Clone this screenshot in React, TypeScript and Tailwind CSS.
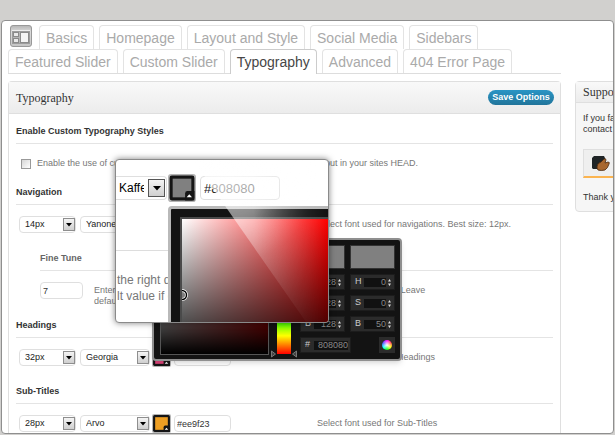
import { useState } from 'react';
import clsx from 'clsx';

const tabRows = [
  ['Basics', 'Homepage', 'Layout and Style', 'Social Media', 'Sidebars'],
  ['Featured Slider', 'Custom Slider', 'Typography', 'Advanced', '404 Error Page'],
];

const rgb = [
  { label: 'R', value: '128' },
  { label: 'G', value: '128' },
  { label: 'B', value: '128' },
];

const hsb = [
  { label: 'H', value: '0' },
  { label: 'S', value: '0' },
  { label: 'B', value: '50' },
];

function LayoutIcon() {
  return (
    <svg width="23" height="23" viewBox="0 0 23 23" className="shrink-0" aria-hidden="true">
      <defs>
        <linearGradient id="frame" x1="0" y1="0" x2="0" y2="1">
          <stop offset="0" stopColor="#b4b4b4" />
          <stop offset="0.3" stopColor="#dcdcdc" />
          <stop offset="1" stopColor="#c4c4c4" />
        </linearGradient>
      </defs>
      <rect x="0.5" y="0.5" width="21" height="21" rx="2.5" fill="url(#frame)" stroke="#999" />
      <path d="M2 5.5h18" stroke="#eee" />
      <rect x="2.5" y="6.5" width="17" height="12" fill="#b4b4b4" stroke="#9c9c9c" />
      <rect x="3.5" y="7.5" width="5" height="4" fill="#e9e9e9" stroke="#8a8a8a" />
      <rect x="3.5" y="13.500" width="5" height="4" fill="#e9e9e9" stroke="#8a8a8a" />
      <rect x="10.5" y="7.5" width="8" height="10" fill="#f4f4f4" stroke="#8a8a8a" />
    </svg>
  );
}

function Tab({ name, active, onClick }: { name: string; active: boolean; onClick: () => void }) {
  return (
    <button
      type="button"
      onClick={onClick}
      className={clsx(
        'h-6 rounded-t-sm border border-b-0 px-1.5 text-sm leading-[22px] whitespace-nowrap',
        active ? '-mb-px h-[25px] border-[#ccc] bg-white text-[#464646]' : 'border-[#e3e3e3] text-[#aaa]'
      )}
    >
      {name}
    </button>
  );
}

function Select({ label, value, className }: { label: string; value: string; className: string }) {
  return (
    <div className={clsx('relative h-[17px] shrink-0', className)}>
      <select
        aria-label={label}
        defaultValue={value}
        className="block h-full w-full appearance-none rounded-sm border border-[#dfdfdf] bg-white pl-[5px] text-[9px] leading-[15px] text-[#222]"
      >
        <option>{value}</option>
      </select>
      <span className="pointer-events-none absolute top-0.5 right-px flex h-[13px] w-3 items-center justify-center border border-[#8e8e8e] bg-gradient-to-b from-[#f4f4f4] to-[#cfcfcf]">
        <svg width="6" height="4" viewBox="0 0 6 4">
          <path d="M0 0h6L3 3.5z" fill="#000" />
        </svg>
      </span>
    </div>
  );
}

function Swatch({ color, size }: { color: string; size: number }) {
  return (
    <button type="button" aria-label={`Pick color ${color}`} className="shrink-0">
      <svg width={size} height={size} viewBox="0 0 18 18">
        <rect width="18" height="18" rx="2" fill="#b5b5b5" />
        <rect x="1" y="1" width="16" height="16" rx="1.5" fill="#151515" />
        <rect x="3" y="3" width="12" height="12" fill={color} />
        <path d="M11 17v-4.500q0-1.500 1.500-1.500H17v6z" fill="#151515" />
        <path d="M12 15l1.700-2 1.700 2z" fill="#fff" />
      </svg>
    </button>
  );
}

function SectionTitle({ children, sub }: { children: string; sub?: boolean }) {
  return (
    <h3
      className={clsx(
        'border-b border-[#e4e4e4] pb-1 text-[9px] leading-4 font-bold',
        sub ? 'ml-6 text-[#666]' : 'text-[#333]'
      )}
    >
      {children}
    </h3>
  );
}

type FontRowProps = { name: string; size: string; font: string; color: string; hint: string };

function FontRow({ name, size, font, color, hint }: FontRowProps) {
  return (
    <div className="mt-[11px] ml-[3px] flex h-[17px] items-center">
      <Select label={`${name} size`} value={size} className="w-[57px]" />
      <Select label={`${name} font`} value={font} className="ml-1 w-[70px]" />
      <div className="ml-0.5 flex items-center gap-[3px]">
        <Swatch color={color} size={19} />
        <input
          aria-label={`${name} color`}
          defaultValue={color}
          className="h-[17px] w-[57px] rounded-sm border border-[#dfdfdf] bg-white px-0.5 text-[9px] text-[#333]"
        />
      </div>
      <p className="ml-[86px] text-[9px] whitespace-nowrap text-[#777]">{hint}</p>
    </div>
  );
}

function PickerField({ label, value }: { label: string; value: string }) {
  return (
    <label className="flex h-4 w-[45px] items-center justify-between border border-[#1c1c1c] bg-[#2b2b2b] pr-[3px] pl-1 text-[9px] text-[#ccc]">
      {label}
      <span className="flex items-center gap-0.5">
        <input
          defaultValue={value}
          className="h-[9px] w-[22px] bg-[#111] text-right text-[9px] leading-[9px] text-[#8a8a8a]"
        />
        <svg width="3" height="7" viewBox="0 0 3 7">
          <path d="M0 2.500L1.500 0 3 2.500zM0 4.500h3L1.500 7z" fill="#ddd" />
        </svg>
      </span>
    </label>
  );
}

function ColorPicker() {
  return (
    <div className="absolute top-[217px] left-[150px] flex h-[123px] w-[250px] rounded-sm border-2 border-[#8f8f8f] bg-[#131313] pt-[5px] pl-1.5 shadow-md">
      <div className="h-[110px] w-[109px] border border-[#555] bg-[linear-gradient(to_top,#000,transparent),linear-gradient(to_right,#fff,#f00)]" />
      <div className="relative ml-2 h-[109px] w-[14px] bg-[linear-gradient(to_bottom,#f00,#f0f,#00f,#0ff,#0f0,#ff0,#f00)]">
        <svg width="26" height="8" viewBox="0 0 26 8" className="absolute -bottom-1 -left-1.5">
          <path d="M0.500 1v6l4-3zM25.500 1v6l-4-3z" fill="#444" stroke="#777" />
        </svg>
      </div>
      <div className="ml-[9px] flex flex-col gap-[5px]">
        <div className="flex gap-[5px]">
          <div className="h-6 w-[45px] border border-[#333] bg-[#808080]" />
          <div className="h-6 w-[45px] border border-[#333] bg-[#808080]" />
        </div>
        <div className="flex gap-[5px]">
          {[rgb, hsb].map((fields, index) => (
            <div key={index} className="flex flex-col gap-[5px]">
              {fields.map((field) => (
                <PickerField key={field.label} {...field} />
              ))}
            </div>
          ))}
        </div>
        <div className="flex justify-between">
          <label className="flex h-4 w-[51px] items-center gap-1 border border-[#1c1c1c] bg-[#2b2b2b] pl-1 text-[9px] text-[#ccc]">
            #
            <input
              defaultValue="808080"
              className="h-[9px] w-[34px] bg-[#111] text-right text-[9px] leading-[9px] text-[#8a8a8a]"
            />
          </label>
          <button
            type="button"
            aria-label="Apply color"
            className="flex size-4 items-center justify-center bg-[#2b2b2b]"
          >
            <span className="size-2.5 rounded-full bg-[radial-gradient(#fff,transparent_70%),conic-gradient(#f0f,#f44,#ff0,#0f0,#0ff,#44f,#f0f)]" />
          </button>
        </div>
      </div>
    </div>
  );
}

function Magnifier() {
  return (
    <div className="absolute top-[138px] left-[113px] h-[164px] w-[214px] overflow-hidden rounded border border-[#8a8a8a] bg-white shadow-[0_0_6px_rgba(0,0,0,0.5)]">
      <div className="mt-3.5 flex h-7 items-center">
        <div className="relative h-6 w-[51px]">
          <select
            aria-label="Font preview"
            className="block h-full w-full appearance-none overflow-hidden rounded-r border border-l-0 border-[#dfdfdf] bg-white pr-[22px] pl-[3px] text-xs text-black"
          >
            <option>Kaffeesatz</option>
          </select>
          <span className="pointer-events-none absolute top-[3px] right-0.5 flex h-[18px] w-[17px] items-center justify-center border border-[#555] bg-gradient-to-b from-[#f4f4f4] to-[#cfcfcf]">
            <svg width="8" height="5" viewBox="0 0 8 5">
              <path d="M0 0h8L4 4.500z" fill="#000" />
            </svg>
          </span>
        </div>
        <div className="ml-px flex items-center gap-1">
          <Swatch color="#808080" size={28} />
          <input
            aria-label="Color preview"
            defaultValue="#808080"
            className="h-6 w-20 rounded border border-[#dfdfdf] px-[3px] text-[13px] text-[#222]"
          />
        </div>
      </div>
      <hr className="mt-12 w-full border-[#ddd]" />
      <p className="mt-[21px] ml-px text-xs leading-4 whitespace-nowrap text-[#777]">
        the right default
        <br />
        lt value if empty
      </p>

      {/* Enlarged picker, runs past the lower right corner */}
      <div className="absolute top-[46px] left-[52px] h-[180px] w-[190px] rounded-tl border-[3px] border-[#b9b9b9] bg-[#131313] pt-2 pl-[9px]">
        <div className="relative h-[154px] w-[150px] border-2 border-[#4a4a4a] bg-[linear-gradient(to_top,#000,transparent),linear-gradient(to_right,#fff,#f00)] bg-origin-content">
          <svg width="7" height="12" viewBox="0 0 7 12" className="absolute top-[70px] left-0">
            <path d="M0 1.500a4.500 4.500 0 0 1 0 9" fill="none" stroke="#fff" strokeWidth="3" />
            <path d="M0 1.500a4.500 4.500 0 0 1 0 9" fill="none" stroke="#000" strokeWidth="1.500" />
          </svg>
        </div>
      </div>

      {/* Glass reflection */}
      <svg viewBox="0 0 212 162" className="pointer-events-none absolute inset-0 h-full w-full">
        <defs>
          <radialGradient id="gloss" gradientUnits="userSpaceOnUse" cx="110" cy="10" r="170">
            <stop offset="0" stopColor="#fff" stopOpacity="0.75" />
            <stop offset="0.3" stopColor="#fff" stopOpacity="0.5" />
            <stop offset="0.55" stopColor="#fff" stopOpacity="0.22" />
            <stop offset="0.8" stopColor="#fff" stopOpacity="0.14" />
            <stop offset="1" stopColor="#fff" stopOpacity="0.1" />
          </radialGradient>
          <linearGradient id="fade">
            <stop offset="0.65" stopColor="#fff" />
            <stop offset="1" stopColor="#000" />
          </linearGradient>
          <mask id="edge">
            <rect width="212" height="162" fill="url(#fade)" />
          </mask>
        </defs>
        <path d="M77 0L190 162H212V0z" fill="url(#gloss)" mask="url(#edge)" />
      </svg>
    </div>
  );
}

function SupportBox() {
  return (
    <aside className="mt-[60px] w-[38px] shrink-0 overflow-hidden">
      <div className="w-52 rounded-sm border border-[#dfdfdf] bg-[#f6f6f6] text-[9px] text-[#333]">
        <h2 className="border-b border-[#dfdfdf] bg-gradient-to-b from-[#f9f9f9] to-[#ececec] pl-[7px] font-['Liberation_Serif',serif] text-xs leading-5 text-[#333]">
          Support
        </h2>
        <div className="px-[7px] pt-2.5 pb-1.5">
          <p className="leading-[11px]">
            If you face any problems
            <br />
            contact me for support.
          </p>
          <a
            href="#support"
            className="mt-3.5 flex h-[29px] items-center border border-b-2 border-[#dfdfdf] border-b-[#fbb450] bg-[#efefef] pl-[7px]"
          >
            <svg width="19" height="17" viewBox="0 0 19 17" aria-hidden="true">
              <path d="M1 3l2-2h10l1 2v10l-2 1H2l-1-1z" fill="#1f2426" />
              <path
                d="M6 12q0-4 4-5l3-3q2-1 2 1l-1 3 3-1q2 0 1 2-1 4-4 6-4 1-7 0-1-1-1-3z"
                fill="#a8672f"
                stroke="#4a2a12"
                strokeWidth="0.800"
              />
            </svg>
            <span className="ml-3">Contact</span>
          </a>
          <p className="mt-[11px] leading-4">Thank you!</p>
        </div>
      </div>
    </aside>
  );
}

export default function App() {
  const [activeTab, setActiveTab] = useState('Typography');

  return (
    <div className="min-h-screen bg-[#d1d0ce] px-px pt-5 font-['Liberation_Sans',Arial,sans-serif]">
      <div className="relative flex gap-3.5 overflow-hidden rounded border border-[#8f8f8f] bg-white pl-1.5">
        <main className="min-w-0 flex-1 pt-1">
          <nav className="border-b border-[#ddd]">
            {tabRows.map((row, index) => (
              <div key={index} className="flex h-6 gap-[5px]">
                {index === 0 && (
                  <div className="ml-0.5 w-6">
                    <LayoutIcon />
                  </div>
                )}
                {row.map((name) => (
                  <Tab key={name} name={name} active={name === activeTab} onClick={() => setActiveTab(name)} />
                ))}
              </div>
            ))}
          </nav>

          <div className="mt-[7px] rounded-t-sm border border-b-0 border-[#dfdfdf]">
            <header className="flex h-8 items-center justify-between border-b border-[#dfdfdf] bg-gradient-to-b from-[#f9f9f9] to-[#ececec] pr-1.5 pl-[7px]">
              <h2 className="font-['Liberation_Serif',serif] text-xs text-[#333]">Typography</h2>
              <button
                type="button"
                className="h-[15px] w-[66px] rounded-full bg-gradient-to-b from-[#2a95c5] to-[#21759b] text-[9px] leading-[15px] font-bold whitespace-nowrap text-white"
              >
                Save Options
              </button>
            </header>

            <div className="px-[7px] pt-[9px] pb-px">
              <SectionTitle>Enable Custom Typography Styles</SectionTitle>
              <label className="ml-[5px] flex h-10 items-center gap-1.5 text-[9px] whitespace-nowrap text-[#777]">
                <input
                  type="checkbox"
                  className="size-2.5 appearance-none border border-[#999] bg-gradient-to-br from-[#d5d5d5] to-white checked:bg-[#21759b]"
                />
                Enable the use of custom typography. Your custom font styles will be output in your sites HEAD.
              </label>

              <SectionTitle>Navigation</SectionTitle>
              <FontRow
                name="Navigation"
                size="14px"
                font="Yanone Kaffeesatz"
                color="#808080"
                hint="Select font used for navigations. Best size: 12px."
              />

              <div className="mt-[17px]">
                <SectionTitle sub>Fine Tune</SectionTitle>
              </div>
              <div className="mt-[11px] mb-2.5 ml-6 flex items-start gap-[11px]">
                <input
                  aria-label="Fine tune"
                  defaultValue="7"
                  className="h-[17px] w-[43px] shrink-0 rounded-sm border border-[#dfdfdf] px-0.5 text-[9px] text-[#333]"
                />
                <p className="pt-[3px] text-[9px] leading-[11px] whitespace-nowrap text-[#777]">
                  Enter a number to fine tune the position of the right drop-down menus arrow. Leave
                  <br />
                  default value if empty.
                </p>
              </div>

              <SectionTitle>Headings</SectionTitle>
              <FontRow name="Headings" size="32px" font="Georgia" color="#e0457b" hint="Select font used for Headings" />

              <div className="mt-[17px]">
                <SectionTitle>Sub-Titles</SectionTitle>
              </div>
              <FontRow name="Sub-Titles" size="28px" font="Arvo" color="#ee9f23" hint="Select font used for Sub-Titles" />
            </div>
          </div>
        </main>

        <SupportBox />
        <ColorPicker />
        <Magnifier />
      </div>
    </div>
  );
}
